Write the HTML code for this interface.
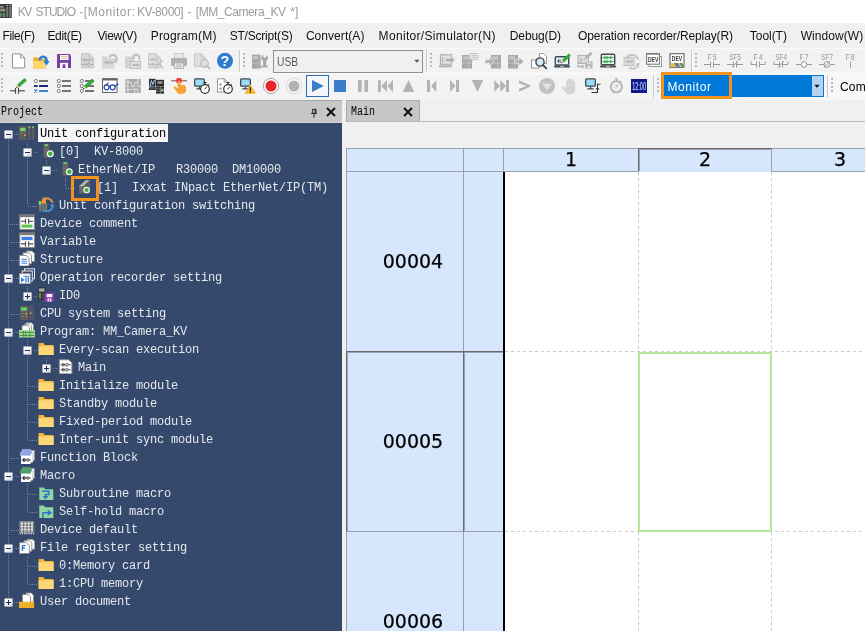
<!DOCTYPE html><html lang="en"><head><meta charset="utf-8"><title>KV STUDIO</title><style>
*{box-sizing:border-box;margin:0;padding:0}
html,body{width:865px;height:631px;overflow:hidden;background:#f0f0f0}
body{position:relative;will-change:transform;font-family:"Liberation Sans",sans-serif;font-size:12px;color:#000}
.abs{position:absolute}
.t{position:absolute;white-space:pre;line-height:1}
#title{left:0;top:0;width:865px;height:23px;background:#fff}
#menubar{left:0;top:23px;width:865px;height:25px;background:#f0f0f0}
#tb1{left:0;top:48px;width:865px;height:25px;background:#f2f2f2}
#tb2{left:0;top:73px;width:865px;height:27px;background:linear-gradient(to right,#f3f3f3 0,#f3f3f3 700px,#f8f8f8 865px)}
.mi{position:absolute;top:29px;height:14px;line-height:14px;white-space:pre;font-size:12px;color:#111}
.ic{position:absolute;width:16px;height:16px;overflow:visible}
.grip{position:absolute;width:2px;height:15px;background:repeating-linear-gradient(to bottom,#b4b4b4 0,#b4b4b4 2px,transparent 2px,transparent 4px)}
.sep{position:absolute;width:1px;height:21px;background:#c9c9c9}
#phead{left:0;top:100px;width:342px;height:23px;background:#c7c7c7;border-top:1px solid #a9a9a9;border-bottom:1px solid #d6d6d2;z-index:2}
#tree{left:0;top:122px;width:342px;height:509px;background:#34496b;overflow:hidden}
.mono{font-family:"Liberation Mono",monospace;font-size:12px;letter-spacing:-0.2px}
.row{position:absolute;left:0;height:18px;line-height:20px;white-space:pre;color:#e4e8ee}
.row span{position:absolute;top:0;height:18px;line-height:18px;white-space:pre}
.pm{position:absolute;width:9px;height:9px;border:1px solid #a4abb8;background:linear-gradient(135deg,#fff 0%,#f4f4f4 50%,#d0d3d8 100%);border-radius:1px}
.pm:before{content:"";position:absolute;left:1px;top:3px;width:5px;height:1px;background:#1a2a5a}
.pm.plus:after{content:"";position:absolute;left:3px;top:1px;width:1px;height:5px;background:#1a2a5a}
.hd{position:absolute;height:1px;background:repeating-linear-gradient(to right,#7d8aa3 0,#7d8aa3 1px,transparent 1px,transparent 2px)}
.vd{position:absolute;width:1px;background:repeating-linear-gradient(to bottom,#7d8aa3 0,#7d8aa3 1px,transparent 1px,transparent 2px)}
#tab{left:346px;top:100px;width:74px;height:22px;background:#c7c7c7;border:1px solid #a9a9a9;border-bottom-color:#b9b9b9}
#grid{left:346px;top:148px;width:519px;height:483px;background:#fff;overflow:hidden}
.gh{position:absolute;background:#d6e6fc}
.gl{position:absolute;background:#9aa0aa}
.num{position:absolute;font-family:"DejaVu Sans","Liberation Sans",sans-serif;font-size:19px;line-height:20px;height:20px;text-align:center;color:#000;white-space:pre;-webkit-text-stroke:0.25px #000}
</style></head><body>
<div id="title" class="abs">
<svg class="abs" style="left:0px;top:4px" width="12" height="14" viewBox="0 0 12 14" ><rect x="0" y="0" width="11.8" height="14" fill="#3a3f39"/><rect x="0.3" y="2" width="3" height="1.6" fill="#a8a8a8"/><rect x="0.3" y="4.6" width="4.8" height="3" fill="#858585"/><rect x="0.3" y="5.4" width="4.8" height="0.8" fill="#aaa9a2"/><rect x="0" y="9.2" width="1.8" height="3.6" fill="#4f9a55"/><rect x="2.8" y="9" width="2.2" height="4" fill="#7a8477"/><rect x="6.4" y="2.8" width="1.7" height="10.4" fill="#7c7c7c"/><rect x="9.2" y="2.8" width="1.7" height="10.4" fill="#7c7c7c"/><rect x="6.8" y="1" width="1" height="1" fill="#d4ead0"/><rect x="9.6" y="1" width="1" height="1" fill="#d4ead0"/></svg>
<div class="t" style="left:17.80px;top:5px;font-size:12px;line-height:14px;color:#9b9b9b;letter-spacing:-1.604px">KV</div>
<div class="t" style="left:35.50px;top:5px;font-size:12px;line-height:14px;color:#9b9b9b;letter-spacing:-0.960px">STUDIO</div>
<div class="t" style="left:79.20px;top:5px;font-size:12px;line-height:14px;color:#9b9b9b;letter-spacing:0.573px">-[Monitor:</div>
<div class="t" style="left:136.90px;top:5px;font-size:12px;line-height:14px;color:#9b9b9b;letter-spacing:-0.391px">KV-8000]</div>
<div class="t" style="left:187.50px;top:5px;font-size:12px;line-height:14px;color:#9b9b9b;letter-spacing:0.000px">-</div>
<div class="t" style="left:195.80px;top:5px;font-size:12px;line-height:14px;color:#9b9b9b;letter-spacing:-0.430px">[MM_Camera_KV</div>
<div class="t" style="left:290.20px;top:5px;font-size:12px;line-height:14px;color:#9b9b9b;letter-spacing:0.130px">*]</div>
</div>
<div id="menubar" class="abs"></div>
<div class="mi" style="left:2.40px;letter-spacing:-0.344px">File(F)</div>
<div class="mi" style="left:47.40px;letter-spacing:-0.330px">Edit(E)</div>
<div class="mi" style="left:97.40px;letter-spacing:-0.315px">View(V)</div>
<div class="mi" style="left:150.70px;letter-spacing:0.188px">Program(M)</div>
<div class="mi" style="left:229.70px;letter-spacing:-0.213px">ST/Script(S)</div>
<div class="mi" style="left:305.90px;letter-spacing:0.054px">Convert(A)</div>
<div class="mi" style="left:378.60px;letter-spacing:0.321px">Monitor/Simulator(N)</div>
<div class="mi" style="left:509.80px;letter-spacing:-0.118px">Debug(D)</div>
<div class="mi" style="left:578.10px;letter-spacing:-0.117px">Operation recorder/Replay(R)</div>
<div class="mi" style="left:749.80px;letter-spacing:-0.040px">Tool(T)</div>
<div class="mi" style="left:800.70px;letter-spacing:0.062px">Window(W)</div>
<div id="tb1" class="abs"></div><div id="tb2" class="abs"></div>
<svg class="abs" style="left:0;top:48px" width="865" height="52" viewBox="0 48 865 52">
<rect x="0" y="48" width="865" height="1" fill="#f9f9f9"/><rect x="0" y="72" width="865" height="3" fill="#f8f8f8"/>
<rect x="1" y="53" width="2" height="2" fill="#b9b9b9"/><rect x="1" y="57" width="2" height="2" fill="#b9b9b9"/><rect x="1" y="61" width="2" height="2" fill="#b9b9b9"/><rect x="1" y="65" width="2" height="2" fill="#b9b9b9"/>
<rect x="1" y="78" width="2" height="2" fill="#b9b9b9"/><rect x="1" y="82" width="2" height="2" fill="#b9b9b9"/><rect x="1" y="86" width="2" height="2" fill="#b9b9b9"/><rect x="1" y="90" width="2" height="2" fill="#b9b9b9"/>
<g transform="translate(10.5 53)"><path d="M2 0.9h8.2l4 4v10H2z" fill="#fff" stroke="#939393" stroke-width="1"/><path d="M10.2 0.9v4h4" fill="none" stroke="#939393" stroke-width="1"/></g>
<g transform="translate(33 53)"><path d="M0 4.2h5l1 1.8H12.5v9.6H0z" fill="#f2b430"/><path d="M0 8h13.2l-1 7.6H0z" fill="#fcd66e"/><path d="M6.6 7.4a3.5 3.5 0 0 1 7-0.3v2" fill="none" stroke="#2f7dd1" stroke-width="2.6"/><path d="M10.2 8h6.6l-3.3 4.4z" fill="#2f7dd1"/></g>
<g transform="translate(56 53)"><path d="M1 1h12.5L15 2.5V15H1z" fill="#7b3fa6"/><rect x="4" y="2" width="8.5" height="5" fill="#fff"/><path d="M5 3.6h6.5M5 5.4h6.5" stroke="#c9c29a" stroke-width="0.9"/><rect x="4" y="9.8" width="8" height="5.2" fill="#fff"/><rect x="6.6" y="11.3" width="2.8" height="3.7" fill="#7b3fa6"/></g>
<g transform="translate(79 53)"><path d="M2.5 0.8h7.8l4.2 4.2v9.8h-12z" fill="#dadada" stroke="#c2c2c2" stroke-width="1"/><path d="M10.3 0.8v4.2h4.2" fill="none" stroke="#c2c2c2" stroke-width="1"/><path d="M3 7H5.5M5.5 5.3v3.4M7.2 5.3v3.4M7.2 7H8.6M11.4 7H14" stroke="#aaaaaa" stroke-width="0.9" fill="none"/><circle cx="10" cy="7" r="1.35" fill="none" stroke="#aaaaaa" stroke-width="0.9"/><path d="M3 11.5H5.5M5.5 9.8v3.4M7.2 9.8v3.4M7.2 11.5H8.6M11.4 11.5H14" stroke="#aaaaaa" stroke-width="0.9" fill="none"/><circle cx="10" cy="11.5" r="1.35" fill="none" stroke="#aaaaaa" stroke-width="0.9"/></g>
<g transform="translate(102 53)"><path d="M0 3.5h5l1 2H12.5v10H0z" fill="#d0d0d0"/><path d="M0 6.5h13l-1 9H0z" fill="#dadada"/><path d="M7.5 4.5a3.6 3.6 0 0 1 7 0.2v2" fill="none" stroke="#c2c2c2" stroke-width="2.2"/><path d="M11 6.5h5.5l-2.7 4z" fill="#c2c2c2"/><path d="M1.5 9.5H4M4 7.8v3.4M5.7 7.8v3.4M5.7 9.5H7.1M9.9 9.5H12" stroke="#ababab" stroke-width="0.9" fill="none"/><circle cx="8.5" cy="9.5" r="1.35" fill="none" stroke="#ababab" stroke-width="0.9"/></g>
<g transform="translate(125 53)"><path d="M0 3.5h5l1 2H9v10H0z" fill="#d2d2d2"/><path d="M8 6V4.2a3.2 3.2 0 0 1 6.3 0.2V7" fill="none" stroke="#c2c2c2" stroke-width="2.2"/><path d="M5.2 5.5h5.6L8 2z" fill="#c2c2c2"/><rect x="5.5" y="8.5" width="10" height="7" fill="#e4e4e4" stroke="#bdbdbd" stroke-width="1"/><path d="M7 12h1.6M9.6 12h1M13 12h1.6M8.6 10.6v2.8M9.6 10.6v2.8" stroke="#ababab" stroke-width="0.9" fill="none"/><circle cx="12" cy="12" r="1.1" fill="none" stroke="#ababab" stroke-width="0.9"/></g>
<g transform="translate(148 53)"><path d="M0.5 0.8h7.8l4.2 4.2v9.8h-12z" fill="#dedede" stroke="#c8c8c8" stroke-width="1"/><path d="M8.3 0.8v4.2h4.2" fill="none" stroke="#c8c8c8" stroke-width="1"/><path d="M1.5 6.5h8M1.5 11.5h8M4 5v3M5.5 5v3M4 10v3M5.5 10v3" stroke="#b8b8b8" stroke-width="0.9" fill="none"/><path d="M7 5.5l8.5 10M15 7l-8 8.5" stroke="#c0c0c0" stroke-width="1.1" fill="none"/></g>
<g transform="translate(171 53)"><rect x="3.3" y="0.6" width="9.4" height="5" fill="#e6e6e6" stroke="#c6c6c6" stroke-width="0.9"/><rect x="0" y="5" width="16" height="8" rx="0.8" fill="#b2b2b2"/><rect x="3.3" y="10" width="9.4" height="5.5" fill="#ededed" stroke="#b2b2b2" stroke-width="1"/><path d="M5 12h6M5 13.8h6" stroke="#b2b2b2" stroke-width="0.9"/></g>
<g transform="translate(194 53)"><path d="M0.5 0.8h7l4 4v8.7h-11z" fill="#dedede" stroke="#c8c8c8" stroke-width="1"/><path d="M7.5 0.8v4h4" fill="none" stroke="#c8c8c8" stroke-width="1"/><circle cx="10.5" cy="10.3" r="3.8" fill="#e0e0e0" stroke="#b8b8b8" stroke-width="1.2"/><path d="M13.2 13l2.6 2.8" stroke="#b8b8b8" stroke-width="1.6" stroke-linecap="round"/></g>
<g transform="translate(217 53)"><circle cx="8" cy="7.8" r="8" fill="#2f7bd0"/><text x="8" y="13" text-anchor="middle" font-family="Liberation Sans,sans-serif" font-weight="bold" font-size="14.5" fill="#fff">?</text></g>
<g transform="translate(251 53)"><rect x="1" y="1.6" width="8.6" height="14" fill="#a4a4a4"/><rect x="2" y="2.9" width="4.73" height="3.2" fill="#c4c4c4"/><path d="M6.848 1.6v14M1 10h8.6" stroke="#c4c4c4" stroke-width="0.8"/><path d="M10.3 4.2l2-2.6v2.2l1.6 1.2l1.4-1.2V1.5l1.6 2.3v2.4l-1.6 1.6v5.6h-3.2V7.8l-1.8-1.6z" fill="#a8a8a8"/><rect x="9.6" y="12.8" width="7.2" height="1.7" fill="#a8a8a8"/></g>
<g transform="translate(439 53)"><rect x="1.5" y="1.8" width="11" height="9.5" fill="#e4e4e4" stroke="#b0b0b0" stroke-width="1.2"/><path d="M0 12.3h13v2H0z" fill="#b0b0b0"/><path d="M3.5 4.5v5M5 4.5v1.6M5 7.5v1.6" stroke="#b0b0b0" stroke-width="0.9"/><path d="M6.5 5.3h5V3l4.5 4l-4.5 4V8.7h-5z" fill="#b0b0b0" stroke="#e8e8e8" stroke-width="0.6"/></g>
<g transform="translate(462 53)"><rect x="0" y="2" width="10" height="13.5" fill="#a8a8a8"/><rect x="1" y="3.3" width="5.5" height="3.2" fill="#c6c6c6"/><path d="M6.8 2v13.5M0 10.1h10" stroke="#c6c6c6" stroke-width="0.8"/><path d="M8.3 0.5h7a0.8 0.8 0 0 1 .8 .8v4.4a.8 .8 0 0 1-.8 .8h-3.6l-1.7 1.8V6.5h-1.7a.8 .8 0 0 1-.8-.8V1.3a.8 .8 0 0 1 .8-.8z" fill="#ececec" stroke="#bcbcbc" stroke-width="0.9"/><path d="M9.3 2.6h5M9.3 4.4h5" stroke="#bcbcbc" stroke-width="0.9"/></g>
<g transform="translate(485 53)"><rect x="6" y="2" width="10" height="13.5" fill="#a8a8a8"/><rect x="7" y="3.3" width="5.5" height="3.2" fill="#c6c6c6"/><path d="M12.8 2v13.5M6 10.1h10" stroke="#c6c6c6" stroke-width="0.8"/><path d="M0 6.8h4.5V4.2L9.5 8.5L4.5 12.8V10.2H0z" fill="#b0b0b0" stroke="#ececec" stroke-width="0.7"/></g>
<g transform="translate(508 53)"><rect x="0" y="2" width="10" height="13.5" fill="#a8a8a8"/><rect x="1" y="3.3" width="5.5" height="3.2" fill="#c6c6c6"/><path d="M6.8 2v13.5M0 10.1h10" stroke="#c6c6c6" stroke-width="0.8"/><path d="M6.5 6.8h4.5V4.2L16 8.5L11 12.8V10.2H6.5z" fill="#b0b0b0" stroke="#ececec" stroke-width="0.7"/></g>
<g transform="translate(531 53)"><path d="M8.5 0.6h4.2l2.8 2.8v7.1h-7z" fill="#fff" stroke="#8a8a8a" stroke-width="0.9"/><rect x="0.5" y="7" width="7.5" height="8" fill="#fff" stroke="#8a8a8a" stroke-width="0.9"/><circle cx="9" cy="9" r="4.1" fill="#d3e9f8" stroke="#3d4852" stroke-width="1.4"/><path d="M12 12.2l3.3 3.2" stroke="#3d4852" stroke-width="1.9" stroke-linecap="round"/></g>
<g transform="translate(554 53)"><rect x="1.3" y="3.8" width="13.4" height="8.2" rx="1" fill="#e9f4fb" stroke="#3f4a55" stroke-width="1.4"/><path d="M0 12.6h16v0.9a1 1 0 0 1-1 1H1a1 1 0 0 1-1-1z" fill="#3f4a55"/><rect x="6" y="13" width="4" height="0.8" fill="#ccc"/><path d="M3 8h1.5M4.5 6.3v3.4M6 6.3v3.4" stroke="#3d4852" stroke-width="0.9"/><g transform="translate(6.8 10.2) rotate(-43)"><path d="M0 0L3 -1.6L3 1.6z" fill="#f2c79b"/><path d="M0 0L1.4 -0.75L1.4 0.75z" fill="#222"/><rect x="3" y="-1.6" width="9.5" height="3.2" fill="#3aa53a"/></g></g>
<g transform="translate(577 53)"><rect x="1" y="2.5" width="10.5" height="8" fill="#e0e0e0" stroke="#b4b4b4" stroke-width="1.1"/><path d="M3 5v3.5M4.5 5v3.5M2 9.5h3" stroke="#b4b4b4" stroke-width="0.9"/><g transform="translate(6.5 7.2) rotate(-43)"><path d="M0 0L3 -1.4L3 1.4z" fill="#d0d0d0"/><path d="M0 0L1.4 -0.75L1.4 0.75z" fill="#999"/><rect x="3" y="-1.4" width="8" height="2.8" fill="#b4b4b4"/></g><rect x="8.3" y="8.5" width="7.2" height="7" fill="#b4b4b4"/><rect x="10" y="9.3" width="4" height="2" fill="#dcdcdc"/><rect x="10" y="13" width="4" height="2.5" fill="#dcdcdc"/><path d="M1 11.5v2h4.5" fill="none" stroke="#b4b4b4" stroke-width="1.3"/><path d="M5 11.6l2.6 1.9L5 15.4z" fill="#b4b4b4"/></g>
<g transform="translate(600 53)"><rect x="1.3" y="1.3" width="13.4" height="10.4" rx="1" fill="#e9f4fb" stroke="#3f4a55" stroke-width="1.4"/><path d="M0 12.6h16v0.9a1 1 0 0 1-1 1H1a1 1 0 0 1-1-1z" fill="#3f4a55"/><rect x="6" y="13" width="4" height="0.8" fill="#ccc"/><path d="M2.5 4.6h11M2.5 8.6h11" stroke="#2e9a3a" stroke-width="0.9"/><rect x="4" y="3.3" width="1.8" height="2.6" fill="#3db54a"/><rect x="6.3" y="3.3" width="1.8" height="2.6" fill="#3db54a"/><circle cx="10.6" cy="4.6" r="1.3" fill="#3db54a"/><rect x="4" y="7.3" width="1.8" height="2.6" fill="#3db54a"/><rect x="6.3" y="7.3" width="1.8" height="2.6" fill="#3db54a"/><circle cx="10.6" cy="8.6" r="1.3" fill="#3db54a"/></g>
<g transform="translate(623 53)"><rect x="1" y="4.5" width="10" height="8" fill="#dcdcdc" stroke="#bdbdbd" stroke-width="1"/><path d="M2.5 8.5h2M4.5 7v3M6 7v3M6 8.5h1M9 8.5h1.3" stroke="#adadad" stroke-width="0.9" fill="none"/><circle cx="8" cy="8.5" r="1" fill="none" stroke="#adadad" stroke-width="0.8"/><path d="M5 3.5a6 6 0 0 1 10 3" fill="none" stroke="#c4c4c4" stroke-width="2"/><path d="M2.3 5l3.2-4.2l1.5 4.6z" fill="#c4c4c4"/><path d="M6 14.5a6 6 0 0 0 9.5-4.5" fill="none" stroke="#c4c4c4" stroke-width="2"/><path d="M12.5 10.5l4 .2l-1.5 4z" fill="#c4c4c4"/></g>
<g transform="translate(646 53)"><rect x="3" y="3.5" width="12.5" height="10" fill="#fff" stroke="#8c8c8c" stroke-width="0.9"/><rect x="0.6" y="0.6" width="12.8" height="10.6" fill="#fff" stroke="#7a7a7a" stroke-width="1.1"/><rect x="0.6" y="0.3" width="12.8" height="1.3" fill="#7a7a7a"/><text x="7.1" y="9.2" text-anchor="middle" font-family="Liberation Sans,sans-serif" font-weight="bold" font-size="7.6" textLength="10.4" lengthAdjust="spacingAndGlyphs" fill="#3a3a3a">DEV</text></g>
<g transform="translate(669 53)"><rect x="1" y="0.7" width="14" height="13.6" fill="#fff" stroke="#6e6e6e" stroke-width="1.2"/><rect x="1.6" y="10" width="12.8" height="3.8" fill="#f2c325"/><path d="M5 10h3.5l2.5 3.8H7.5z" fill="#3a7cc8"/><path d="M10.5 10h2l1.9 2.5v1.3h-1.4z" fill="#3a7cc8"/><text x="8" y="8.3" text-anchor="middle" font-family="Liberation Sans,sans-serif" font-weight="bold" font-size="7.6" textLength="10.4" lengthAdjust="spacingAndGlyphs" fill="#3a3a3a">DEV</text></g>
<g transform="translate(704 53)"><text x="3.7" y="6.7" font-family="Liberation Sans,sans-serif" font-size="8.8" textLength="3.9" lengthAdjust="spacingAndGlyphs" fill="#929292">F</text><text x="8.9" y="6.7" font-family="Liberation Sans,sans-serif" font-size="8.8" textLength="3.6" lengthAdjust="spacingAndGlyphs" fill="#929292">5</text><path d="M0 11.5h6.5M9.5 11.5h6.5M6.5 8.6v5.8M9.5 8.6v5.8" stroke="#9a9a9a" stroke-width="1" fill="none"/></g>
<g transform="translate(727 53)"><text x="2.3" y="6.7" font-family="Liberation Sans,sans-serif" font-size="8.8" textLength="11.6" lengthAdjust="spacingAndGlyphs" fill="#929292">SF5</text><path d="M0 11.5h6.5M9.5 11.5h6.5M6.5 8.5v6M9.5 8.5v6M5 14.5l6-6.5" stroke="#9a9a9a" stroke-width="1" fill="none"/></g>
<g transform="translate(750 53)"><text x="3.7" y="6.7" font-family="Liberation Sans,sans-serif" font-size="8.8" textLength="3.9" lengthAdjust="spacingAndGlyphs" fill="#929292">F</text><text x="8.9" y="6.7" font-family="Liberation Sans,sans-serif" font-size="8.8" textLength="3.6" lengthAdjust="spacingAndGlyphs" fill="#929292">4</text><path d="M1 8.5v3h5.5M6.5 8.5v6M9.5 8.5v6M9.5 11.5h5.5v-3" stroke="#9a9a9a" stroke-width="1" fill="none"/></g>
<g transform="translate(773 53)"><text x="2.3" y="6.7" font-family="Liberation Sans,sans-serif" font-size="8.8" textLength="11.6" lengthAdjust="spacingAndGlyphs" fill="#929292">SF4</text><path d="M1 8.5v3h5.5M6.5 8.5v6M9.5 8.5v6M9.5 11.5h5.5v-3M5 14.5l6-6.5" stroke="#9a9a9a" stroke-width="1" fill="none"/></g>
<g transform="translate(796 53)"><text x="3.7" y="6.7" font-family="Liberation Sans,sans-serif" font-size="8.8" textLength="3.9" lengthAdjust="spacingAndGlyphs" fill="#929292">F</text><text x="8.9" y="6.7" font-family="Liberation Sans,sans-serif" font-size="8.8" textLength="3.6" lengthAdjust="spacingAndGlyphs" fill="#929292">7</text><path d="M0 11.5h5M11 11.5h5" stroke="#9a9a9a" stroke-width="1" fill="none"/><circle cx="8" cy="11.5" r="2.9" stroke="#9a9a9a" stroke-width="1" fill="none"/></g>
<g transform="translate(819 53)"><text x="2.3" y="6.7" font-family="Liberation Sans,sans-serif" font-size="8.8" textLength="11.6" lengthAdjust="spacingAndGlyphs" fill="#929292">SF7</text><path d="M0 11.5h5M11 11.5h5M5.2 14.6l5.6-6.2" stroke="#9a9a9a" stroke-width="1" fill="none"/><circle cx="8" cy="11.5" r="2.9" stroke="#9a9a9a" stroke-width="1" fill="none"/></g>
<g transform="translate(842 53)"><text x="3.7" y="6.7" font-family="Liberation Sans,sans-serif" font-size="8.8" textLength="3.9" lengthAdjust="spacingAndGlyphs" fill="#929292">F</text><text x="8.9" y="6.7" font-family="Liberation Sans,sans-serif" font-size="8.8" textLength="3.6" lengthAdjust="spacingAndGlyphs" fill="#929292">8</text><path d="M8.5 8.7v5.8" stroke="#9a9a9a" stroke-width="1" fill="none"/></g>
<rect x="239" y="50" width="1" height="22" fill="#c9c9c9"/><rect x="240" y="50" width="1" height="22" fill="#fafafa"/>
<rect x="243" y="53" width="2" height="2" fill="#b9b9b9"/><rect x="243" y="57" width="2" height="2" fill="#b9b9b9"/><rect x="243" y="61" width="2" height="2" fill="#b9b9b9"/><rect x="243" y="65" width="2" height="2" fill="#b9b9b9"/>
<rect x="426" y="50" width="1" height="22" fill="#c9c9c9"/><rect x="427" y="50" width="1" height="22" fill="#fafafa"/>
<rect x="430" y="53" width="2" height="2" fill="#b9b9b9"/><rect x="430" y="57" width="2" height="2" fill="#b9b9b9"/><rect x="430" y="61" width="2" height="2" fill="#b9b9b9"/><rect x="430" y="65" width="2" height="2" fill="#b9b9b9"/>
<rect x="691" y="50" width="1" height="22" fill="#c9c9c9"/><rect x="692" y="50" width="1" height="22" fill="#fafafa"/>
<rect x="695" y="53" width="2" height="2" fill="#b9b9b9"/><rect x="695" y="57" width="2" height="2" fill="#b9b9b9"/><rect x="695" y="61" width="2" height="2" fill="#b9b9b9"/><rect x="695" y="65" width="2" height="2" fill="#b9b9b9"/>
<rect x="306.5" y="75.5" width="22" height="21" fill="#f3f7fb" stroke="#2a6db3" stroke-width="1"/>
<g transform="translate(309 78)"><path d="M3 2L14.8 8L3 14z" fill="#3a7cc8"/></g>
<g transform="translate(10 78)"><path d="M0 12.8h5.6M9 12.8h6M5.6 9.8v6M8.6 9.8v6" stroke="#333" stroke-width="1" fill="none"/><g transform="translate(6 10) rotate(-42)"><path d="M0 0L3 -1.7L3 1.7z" fill="#f2c79b"/><path d="M0 0L1.4 -0.75L1.4 0.75z" fill="#222"/><rect x="3" y="-1.7" width="10" height="3.4" fill="#3aa53a"/></g></g>
<g transform="translate(33.5 78)"><circle cx="2.3" cy="3" r="1.6" fill="#fff" stroke="#6e6e6e" stroke-width="0.9"/><rect x="5.5" y="2.05" width="9" height="1.9" fill="#6e6e6e"/><rect x="0.5" y="7.1" width="3.6" height="1.8" fill="#101a70"/><rect x="5.5" y="7.05" width="9" height="1.9" fill="#101a70"/><path d="M0.8 11.5l3 3M3.8 11.5l-3 3" stroke="#3a7cc8" stroke-width="1.1"/><rect x="5.5" y="12.05" width="9" height="1.9" fill="#3a7cc8"/></g>
<g transform="translate(56.5 78)"><circle cx="2.3" cy="3" r="1.6" fill="#fff" stroke="#6e6e6e" stroke-width="0.9"/><rect x="5.5" y="2.05" width="9" height="1.9" fill="#6e6e6e"/><circle cx="2.3" cy="8" r="1.6" fill="#fff" stroke="#6e6e6e" stroke-width="0.9"/><rect x="5.5" y="7.05" width="9" height="1.9" fill="#6e6e6e"/><circle cx="2.3" cy="13" r="1.6" fill="#fff" stroke="#6e6e6e" stroke-width="0.9"/><rect x="5.5" y="12.05" width="9" height="1.9" fill="#6e6e6e"/></g>
<g transform="translate(79.5 78)"><circle cx="2.3" cy="3" r="1.6" fill="#fff" stroke="#6e6e6e" stroke-width="0.9"/><rect x="5.5" y="2.05" width="9" height="1.9" fill="#6e6e6e"/><circle cx="2.3" cy="8" r="1.6" fill="#fff" stroke="#6e6e6e" stroke-width="0.9"/><rect x="5.5" y="7.05" width="9" height="1.9" fill="#6e6e6e"/><circle cx="2.3" cy="13" r="1.6" fill="#fff" stroke="#6e6e6e" stroke-width="0.9"/><rect x="5.5" y="12.05" width="9" height="1.9" fill="#6e6e6e"/><g transform="translate(3.5 11.2) rotate(-42)"><path d="M0 0L3 -1.8L3 1.8z" fill="#f2c79b"/><path d="M0 0L1.4 -0.75L1.4 0.75z" fill="#222"/><rect x="3" y="-1.8" width="11" height="3.6" fill="#3aa53a"/></g></g>
<g transform="translate(102 78)"><rect x="0.5" y="0.8" width="14.5" height="13.7" fill="#fff" stroke="#666" stroke-width="1"/><rect x="0" y="0.3" width="15.5" height="2.2" fill="#666"/><circle cx="4.6" cy="9.3" r="2.5" fill="none" stroke="#1f3fa8" stroke-width="1.2"/><circle cx="10.6" cy="9.3" r="2.5" fill="none" stroke="#1f3fa8" stroke-width="1.2"/><path d="M2.3 8.3L6.5 4.6M7 9h1.3M13 8.4l2.6-2.6M15.6 5.2v2" fill="none" stroke="#1f3fa8" stroke-width="1.1"/></g>
<g transform="translate(125 78)"><rect x="0.3" y="1" width="15.5" height="14" fill="#a8a8a8"/><path d="M3 1v14M0.3 4.2h6.4M0.3 8h3M0.3 11.7h6.4M6.7 4.2v4.4h3v-4.4M9.7 4.2h3.2v-3.2M12.9 4.2v4.4h3M6.7 11.7v-0.6h6.2v4M9.7 11.1v4" fill="none" stroke="#ececec" stroke-width="0.9"/></g>
<g transform="translate(148.5 78)"><rect x="0.5" y="0.8" width="6.5" height="10.5" fill="#2a2f3a"/><path d="M1.3 9.5l1.6-7l1.5 4l1.6-4.5" fill="none" stroke="#c8d4f0" stroke-width="0.9"/><path d="M1 8.3h5M1.5 10.2h4" stroke="#aab4d4" stroke-width="0.7"/><rect x="0.3" y="10.8" width="7" height="1" fill="#111"/><rect x="7.5" y="1.8" width="8" height="13.8" fill="#2c2c2c"/><rect x="9" y="3.2" width="5" height="2.6" fill="#9a9a9a"/><path d="M7.5 8.5h8M7.5 11h8M7.5 13.3h8M12 8.5v7" stroke="#8a8a8a" stroke-width="0.8"/><rect x="12.6" y="11.6" width="2.4" height="1.2" fill="#e8e8e8"/></g>
<g transform="translate(171 78)"><path d="M0 2.8h16" stroke="#8a2a2a" stroke-width="0.9"/><rect x="5.5" y="0.3" width="5" height="4.6" fill="#e8262a"/><path d="M6.6 4v6.2l-2.3-1.7c-1-.7-2.2 .4-1.4 1.5l3.2 4.4c.8 1 1.8 1.6 3.2 1.6h2c2.2 0 3.9-1.7 3.9-3.9V10c0-1.7-1.3-2.9-3-2.9H9.6V4c0-2-3-2-3 0z" fill="#f7a23a"/></g>
<g transform="translate(194 78)"><rect x="0.65" y="0.95" width="9.7" height="7.2" rx="1" fill="#9bdcf5" stroke="#3d4852" stroke-width="1.3"/><path d="M5.5 8.8v2M2.42 10.8h6.16" stroke="#3d4852" stroke-width="1.2"/><circle cx="11" cy="11" r="4.3" fill="#fff" stroke="#333" stroke-width="1.2"/><path d="M9.5 4.5h3M11 4.7v1.6M13.795 6.315l1.2 1.2" stroke="#333" stroke-width="1.1" fill="none"/><path d="M10.7 11.4l2-2.6" stroke="#333" stroke-width="1"/></g>
<g transform="translate(217 78)"><path d="M0.5 0.8h6.7l3.3 3.3v9.9h-10z" fill="#fff" stroke="#8a8a8a" stroke-width="0.9"/><path d="M7.2 0.8v3.3h3.3" fill="none" stroke="#8a8a8a" stroke-width="0.9"/><path d="M2 6.5h2M4 5v3M2 10.5h2M4 9v3" stroke="#8a8a8a" stroke-width="0.9"/><circle cx="11" cy="11" r="4.3" fill="#fff" stroke="#333" stroke-width="1.2"/><path d="M9.5 4.5h3M11 4.7v1.6M13.795 6.315l1.2 1.2" stroke="#333" stroke-width="1.1" fill="none"/><path d="M10.7 11.4l2-2.6" stroke="#333" stroke-width="1"/></g>
<g transform="translate(240 78)"><rect x="0.65" y="0.95" width="9.7" height="7.2" rx="1" fill="#9bdcf5" stroke="#3d4852" stroke-width="1.3"/><path d="M5.5 8.8v2M2.42 10.8h6.16" stroke="#3d4852" stroke-width="1.2"/><path d="M10.3 6.2L16.2 15.8H4.4z" fill="#f5b92e"/><path d="M10.3 9.3v3.6" stroke="#222" stroke-width="1.3"/><circle cx="10.3" cy="14.3" r="0.75" fill="#222"/></g>
<g transform="translate(263 78)"><circle cx="8" cy="8" r="7.6" fill="#fff" stroke="#9a9a9a" stroke-width="0.9"/><circle cx="8" cy="8" r="5.5" fill="#e6262b"/></g>
<g transform="translate(286 78)"><circle cx="8" cy="8" r="7.6" fill="#fbfbfb" stroke="#d2d2d2" stroke-width="0.9"/><circle cx="8" cy="8" r="5.5" fill="#b3b3b3"/></g>
<g transform="translate(332 78)"><rect x="2" y="2" width="12" height="12" fill="#3a7cc8"/></g>
<g transform="translate(355 78)"><rect x="3" y="2" width="3.6" height="12" fill="#b3b3b3"/><rect x="9.4" y="2" width="3.6" height="12" fill="#b3b3b3"/></g>
<g transform="translate(378 78)"><rect x="0" y="2" width="2.8" height="12" fill="#b3b3b3"/><path d="M9 2v12L3.2 8z" fill="#b3b3b3"/><path d="M15 2v12L9.3 8z" fill="#b3b3b3"/></g>
<g transform="translate(400.5 78)"><path d="M8 2l5.8 12H2.2z" fill="#b3b3b3"/></g>
<g transform="translate(424 78)"><rect x="3" y="2" width="3" height="12" fill="#b3b3b3"/><path d="M12.3 2v12L7 8z" fill="#b3b3b3"/></g>
<g transform="translate(447 78)"><rect x="9" y="2" width="3" height="12" fill="#b3b3b3"/><path d="M3 2v12L8.5 8z" fill="#b3b3b3"/></g>
<g transform="translate(469.5 78)"><path d="M8 14L2.2 2h11.6z" fill="#b3b3b3"/></g>
<g transform="translate(494 78)"><rect x="12" y="2" width="3" height="12" fill="#b3b3b3"/><path d="M0.3 2v12L6 8z" fill="#b3b3b3"/><path d="M6.3 2v12L12 8z" fill="#b3b3b3"/></g>
<g transform="translate(516.5 78)"><path d="M2.5 2.2v3L10 8L2.5 10.8v3L14 8.6V7.4z" fill="#b3b3b3"/></g>
<g transform="translate(539 78)"><circle cx="8" cy="8" r="8" fill="#c2c2c2"/><path d="M3.3 5.8h9.4L8 12.6z" fill="#e4e4e4"/></g>
<g transform="translate(562 78)"><path d="M5.2 15.8c-1.4-1.6-3.3-3.9-4.7-5.6c-.7-.9 .5-2 1.5-1.1l2.6 2.3V3.6c0-1.4 2-1.4 2 0v4.4V1.7c0-1.4 2.1-1.4 2.1 0V8V2.2c0-1.4 2.1-1.4 2.1 0V8.2V4.2c0-1.3 2-1.3 2 0v7.6c0 2.4-1.4 4-3.2 4z" fill="#d2d2d2" stroke="#d2d2d2" stroke-width="0.7"/><path d="M6.6 8V4M8.7 8V3M10.8 8.2V3.5" stroke="#e6e6e6" stroke-width="0.5"/></g>
<g transform="translate(585 78)"><rect x="0.65" y="0.95" width="9.7" height="7.2" rx="1" fill="#9bdcf5" stroke="#3d4852" stroke-width="1.3"/><path d="M5.5 8.8v2M2.42 10.8h6.16" stroke="#3d4852" stroke-width="1.2"/><path d="M6.5 14.5h6V6.2h3" fill="none" stroke="#333" stroke-width="1.1"/><path d="M11 11.5l1.5-2l1.5 2" fill="none" stroke="#333" stroke-width="1"/></g>
<g transform="translate(608.3 78)"><circle cx="8" cy="8.8" r="5.7" fill="#ebebeb" stroke="#adadad" stroke-width="1.6"/><path d="M6.5 0.9h3M8 1.1v1.6M11.705 2.785l1.2 1.2" stroke="#adadad" stroke-width="1.1" fill="none"/><path d="M7.7 9.2l2-2.6" stroke="#adadad" stroke-width="1"/></g>
<g transform="translate(631 78)"><rect x="0" y="1" width="16" height="14" fill="#0d1b8c"/><text x="1.2" y="12" font-family="Liberation Sans,sans-serif" font-size="10.5" textLength="13.8" lengthAdjust="spacingAndGlyphs" fill="#cfe6ff">12:00</text></g>
<rect x="653" y="75" width="1" height="23" fill="#c9c9c9"/><rect x="654" y="75" width="1" height="23" fill="#fafafa"/>
<rect x="657" y="78" width="2" height="2" fill="#b9b9b9"/><rect x="657" y="82" width="2" height="2" fill="#b9b9b9"/><rect x="657" y="86" width="2" height="2" fill="#b9b9b9"/><rect x="657" y="90" width="2" height="2" fill="#b9b9b9"/>
<rect x="827" y="75" width="1" height="23" fill="#c9c9c9"/><rect x="828" y="75" width="1" height="23" fill="#fafafa"/>
<rect x="831" y="78" width="2" height="2" fill="#b9b9b9"/><rect x="831" y="82" width="2" height="2" fill="#b9b9b9"/><rect x="831" y="86" width="2" height="2" fill="#b9b9b9"/><rect x="831" y="90" width="2" height="2" fill="#b9b9b9"/>
</svg>
<div class="abs" style="left:273px;top:50px;width:150px;height:23px;border:1px solid #909090;background:#f0f0f0"></div>
<div class="t" style="left:276.83px;top:55px;font-size:12px;line-height:14px;color:#5a5a5a;transform:scaleX(0.8546);transform-origin:0 0">USB</div>
<svg class="abs" style="left:413px;top:59px" width="8" height="5" viewBox="0 0 8 5"><path d="M1.2 0.7h5.4L3.9 3.8z" fill="#555"/></svg>
<div class="abs" style="left:663px;top:75px;width:161px;height:22px;background:#0078d7"></div>
<div class="abs" style="left:812px;top:76px;width:11px;height:20px;background:#b5d3f0"></div>
<svg class="abs" style="left:813px;top:84px" width="8" height="5" viewBox="0 0 8 5"><path d="M1.3 0.8h5.4L4 3.8z" fill="#111"/></svg>
<div class="t" style="left:667.50px;top:80px;font-size:12px;line-height:14px;color:#fff;letter-spacing:0.580px">Monitor</div>
<div class="abs" style="left:661px;top:72px;width:71px;height:27px;border:3px solid #f4931c"></div>
<div class="t" style="left:840px;top:80px;font-size:12px;line-height:14px;color:#000;letter-spacing:0.2px">Com</div>
<div id="phead" class="abs"><div class="t mono" style="left:1px;top:4px;line-height:14px;color:#000;font-size:12px;letter-spacing:0;transform:scaleX(0.8333);transform-origin:0 0">Project</div>
<svg class="abs" style="left:309px;top:6.5px" width="10" height="10" viewBox="0 0 10 12" ><path d="M3 1.5h4.5M3.5 1.5v5M6.5 1.5v5M7.3 1.5v5M1.5 6.5h7M5 6.5v5" stroke="#111" stroke-width="1.1" fill="none"/></svg>
<svg class="abs" style="left:325.5px;top:6px" width="10" height="10" viewBox="0 0 10 10" ><path d="M1 1L9 9M9 1L1 9" stroke="#111" stroke-width="2" fill="none"/></svg>
</div>
<div id="tree" class="abs mono">
<svg class="abs" style="left:0;top:0" width="343" height="509" viewBox="0 0 343 509" shape-rendering="crispEdges"><path d="M8 18h1v1h-1zM8 20h1v1h-1zM8 22h1v1h-1zM8 24h1v1h-1zM8 26h1v1h-1zM8 28h1v1h-1zM8 30h1v1h-1zM8 32h1v1h-1zM8 34h1v1h-1zM8 36h1v1h-1zM8 38h1v1h-1zM8 40h1v1h-1zM8 42h1v1h-1zM8 44h1v1h-1zM8 46h1v1h-1zM8 48h1v1h-1zM8 50h1v1h-1zM8 52h1v1h-1zM8 54h1v1h-1zM8 56h1v1h-1zM8 58h1v1h-1zM8 60h1v1h-1zM8 62h1v1h-1zM8 64h1v1h-1zM8 66h1v1h-1zM8 68h1v1h-1zM8 70h1v1h-1zM8 72h1v1h-1zM8 74h1v1h-1zM8 76h1v1h-1zM8 78h1v1h-1zM8 80h1v1h-1zM8 82h1v1h-1zM8 84h1v1h-1zM8 86h1v1h-1zM8 88h1v1h-1zM8 90h1v1h-1zM8 92h1v1h-1zM8 94h1v1h-1zM8 96h1v1h-1zM8 98h1v1h-1zM8 100h1v1h-1zM8 102h1v1h-1zM8 104h1v1h-1zM8 106h1v1h-1zM8 108h1v1h-1zM8 110h1v1h-1zM8 112h1v1h-1zM8 114h1v1h-1zM8 116h1v1h-1zM8 118h1v1h-1zM8 120h1v1h-1zM8 122h1v1h-1zM8 124h1v1h-1zM8 126h1v1h-1zM8 128h1v1h-1zM8 130h1v1h-1zM8 132h1v1h-1zM8 134h1v1h-1zM8 136h1v1h-1zM8 138h1v1h-1zM8 140h1v1h-1zM8 142h1v1h-1zM8 144h1v1h-1zM8 146h1v1h-1zM8 148h1v1h-1zM8 150h1v1h-1zM8 162h1v1h-1zM8 164h1v1h-1zM8 166h1v1h-1zM8 168h1v1h-1zM8 170h1v1h-1zM8 172h1v1h-1zM8 174h1v1h-1zM8 176h1v1h-1zM8 178h1v1h-1zM8 180h1v1h-1zM8 182h1v1h-1zM8 184h1v1h-1zM8 186h1v1h-1zM8 188h1v1h-1zM8 190h1v1h-1zM8 192h1v1h-1zM8 194h1v1h-1zM8 196h1v1h-1zM8 198h1v1h-1zM8 200h1v1h-1zM8 202h1v1h-1zM8 204h1v1h-1zM8 216h1v1h-1zM8 218h1v1h-1zM8 220h1v1h-1zM8 222h1v1h-1zM8 224h1v1h-1zM8 226h1v1h-1zM8 228h1v1h-1zM8 230h1v1h-1zM8 232h1v1h-1zM8 234h1v1h-1zM8 236h1v1h-1zM8 238h1v1h-1zM8 240h1v1h-1zM8 242h1v1h-1zM8 244h1v1h-1zM8 246h1v1h-1zM8 248h1v1h-1zM8 250h1v1h-1zM8 252h1v1h-1zM8 254h1v1h-1zM8 256h1v1h-1zM8 258h1v1h-1zM8 260h1v1h-1zM8 262h1v1h-1zM8 264h1v1h-1zM8 266h1v1h-1zM8 268h1v1h-1zM8 270h1v1h-1zM8 272h1v1h-1zM8 274h1v1h-1zM8 276h1v1h-1zM8 278h1v1h-1zM8 280h1v1h-1zM8 282h1v1h-1zM8 284h1v1h-1zM8 286h1v1h-1zM8 288h1v1h-1zM8 290h1v1h-1zM8 292h1v1h-1zM8 294h1v1h-1zM8 296h1v1h-1zM8 298h1v1h-1zM8 300h1v1h-1zM8 302h1v1h-1zM8 304h1v1h-1zM8 306h1v1h-1zM8 308h1v1h-1zM8 310h1v1h-1zM8 312h1v1h-1zM8 314h1v1h-1zM8 316h1v1h-1zM8 318h1v1h-1zM8 320h1v1h-1zM8 322h1v1h-1zM8 324h1v1h-1zM8 326h1v1h-1zM8 328h1v1h-1zM8 330h1v1h-1zM8 332h1v1h-1zM8 334h1v1h-1zM8 336h1v1h-1zM8 338h1v1h-1zM8 340h1v1h-1zM8 342h1v1h-1zM8 344h1v1h-1zM8 346h1v1h-1zM8 348h1v1h-1zM8 360h1v1h-1zM8 362h1v1h-1zM8 364h1v1h-1zM8 366h1v1h-1zM8 368h1v1h-1zM8 370h1v1h-1zM8 372h1v1h-1zM8 374h1v1h-1zM8 376h1v1h-1zM8 378h1v1h-1zM8 380h1v1h-1zM8 382h1v1h-1zM8 384h1v1h-1zM8 386h1v1h-1zM8 388h1v1h-1zM8 390h1v1h-1zM8 392h1v1h-1zM8 394h1v1h-1zM8 396h1v1h-1zM8 398h1v1h-1zM8 400h1v1h-1zM8 402h1v1h-1zM8 404h1v1h-1zM8 406h1v1h-1zM8 408h1v1h-1zM8 410h1v1h-1zM8 412h1v1h-1zM8 414h1v1h-1zM8 416h1v1h-1zM8 418h1v1h-1zM8 420h1v1h-1zM8 432h1v1h-1zM8 434h1v1h-1zM8 436h1v1h-1zM8 438h1v1h-1zM8 440h1v1h-1zM8 442h1v1h-1zM8 444h1v1h-1zM8 446h1v1h-1zM8 448h1v1h-1zM8 450h1v1h-1zM8 452h1v1h-1zM8 454h1v1h-1zM8 456h1v1h-1zM8 458h1v1h-1zM8 460h1v1h-1zM8 462h1v1h-1zM8 464h1v1h-1zM8 466h1v1h-1zM8 468h1v1h-1zM8 470h1v1h-1zM8 472h1v1h-1zM8 474h1v1h-1zM10 102h1v1h-1zM10 120h1v1h-1zM10 138h1v1h-1zM10 192h1v1h-1zM10 336h1v1h-1zM10 408h1v1h-1zM12 102h1v1h-1zM12 120h1v1h-1zM12 138h1v1h-1zM12 192h1v1h-1zM12 336h1v1h-1zM12 408h1v1h-1zM14 12h1v1h-1zM14 102h1v1h-1zM14 120h1v1h-1zM14 138h1v1h-1zM14 156h1v1h-1zM14 192h1v1h-1zM14 210h1v1h-1zM14 336h1v1h-1zM14 354h1v1h-1zM14 408h1v1h-1zM14 426h1v1h-1zM14 480h1v1h-1zM16 12h1v1h-1zM16 102h1v1h-1zM16 120h1v1h-1zM16 138h1v1h-1zM16 156h1v1h-1zM16 192h1v1h-1zM16 210h1v1h-1zM16 336h1v1h-1zM16 354h1v1h-1zM16 408h1v1h-1zM16 426h1v1h-1zM16 480h1v1h-1zM18 12h1v1h-1zM18 102h1v1h-1zM18 120h1v1h-1zM18 138h1v1h-1zM18 156h1v1h-1zM18 192h1v1h-1zM18 210h1v1h-1zM18 336h1v1h-1zM18 354h1v1h-1zM18 408h1v1h-1zM18 426h1v1h-1zM18 480h1v1h-1zM27 20h1v1h-1zM27 22h1v1h-1zM27 24h1v1h-1zM27 36h1v1h-1zM27 38h1v1h-1zM27 40h1v1h-1zM27 42h1v1h-1zM27 44h1v1h-1zM27 46h1v1h-1zM27 48h1v1h-1zM27 50h1v1h-1zM27 52h1v1h-1zM27 54h1v1h-1zM27 56h1v1h-1zM27 58h1v1h-1zM27 60h1v1h-1zM27 62h1v1h-1zM27 64h1v1h-1zM27 66h1v1h-1zM27 68h1v1h-1zM27 70h1v1h-1zM27 72h1v1h-1zM27 74h1v1h-1zM27 76h1v1h-1zM27 78h1v1h-1zM27 80h1v1h-1zM27 82h1v1h-1zM27 164h1v1h-1zM27 166h1v1h-1zM27 168h1v1h-1zM27 218h1v1h-1zM27 220h1v1h-1zM27 222h1v1h-1zM27 234h1v1h-1zM27 236h1v1h-1zM27 238h1v1h-1zM27 240h1v1h-1zM27 242h1v1h-1zM27 244h1v1h-1zM27 246h1v1h-1zM27 248h1v1h-1zM27 250h1v1h-1zM27 252h1v1h-1zM27 254h1v1h-1zM27 256h1v1h-1zM27 258h1v1h-1zM27 260h1v1h-1zM27 262h1v1h-1zM27 264h1v1h-1zM27 266h1v1h-1zM27 268h1v1h-1zM27 270h1v1h-1zM27 272h1v1h-1zM27 274h1v1h-1zM27 276h1v1h-1zM27 278h1v1h-1zM27 280h1v1h-1zM27 282h1v1h-1zM27 284h1v1h-1zM27 286h1v1h-1zM27 288h1v1h-1zM27 290h1v1h-1zM27 292h1v1h-1zM27 294h1v1h-1zM27 296h1v1h-1zM27 298h1v1h-1zM27 300h1v1h-1zM27 302h1v1h-1zM27 304h1v1h-1zM27 306h1v1h-1zM27 308h1v1h-1zM27 310h1v1h-1zM27 312h1v1h-1zM27 314h1v1h-1zM27 316h1v1h-1zM27 362h1v1h-1zM27 364h1v1h-1zM27 366h1v1h-1zM27 368h1v1h-1zM27 370h1v1h-1zM27 372h1v1h-1zM27 374h1v1h-1zM27 376h1v1h-1zM27 378h1v1h-1zM27 380h1v1h-1zM27 382h1v1h-1zM27 384h1v1h-1zM27 386h1v1h-1zM27 388h1v1h-1zM27 434h1v1h-1zM27 436h1v1h-1zM27 438h1v1h-1zM27 440h1v1h-1zM27 442h1v1h-1zM27 444h1v1h-1zM27 446h1v1h-1zM27 448h1v1h-1zM27 450h1v1h-1zM27 452h1v1h-1zM27 454h1v1h-1zM27 456h1v1h-1zM27 458h1v1h-1zM27 460h1v1h-1zM28 84h1v1h-1zM28 264h1v1h-1zM28 282h1v1h-1zM28 300h1v1h-1zM28 318h1v1h-1zM28 372h1v1h-1zM28 390h1v1h-1zM28 444h1v1h-1zM28 462h1v1h-1zM30 84h1v1h-1zM30 264h1v1h-1zM30 282h1v1h-1zM30 300h1v1h-1zM30 318h1v1h-1zM30 372h1v1h-1zM30 390h1v1h-1zM30 444h1v1h-1zM30 462h1v1h-1zM32 84h1v1h-1zM32 264h1v1h-1zM32 282h1v1h-1zM32 300h1v1h-1zM32 318h1v1h-1zM32 372h1v1h-1zM32 390h1v1h-1zM32 444h1v1h-1zM32 462h1v1h-1zM34 30h1v1h-1zM34 84h1v1h-1zM34 174h1v1h-1zM34 228h1v1h-1zM34 264h1v1h-1zM34 282h1v1h-1zM34 300h1v1h-1zM34 318h1v1h-1zM34 372h1v1h-1zM34 390h1v1h-1zM34 444h1v1h-1zM34 462h1v1h-1zM36 30h1v1h-1zM36 84h1v1h-1zM36 174h1v1h-1zM36 228h1v1h-1zM36 264h1v1h-1zM36 282h1v1h-1zM36 300h1v1h-1zM36 318h1v1h-1zM36 372h1v1h-1zM36 390h1v1h-1zM36 444h1v1h-1zM36 462h1v1h-1zM46 38h1v1h-1zM46 40h1v1h-1zM46 42h1v1h-1zM46 236h1v1h-1zM46 238h1v1h-1zM46 240h1v1h-1zM52 48h1v1h-1zM52 246h1v1h-1zM54 48h1v1h-1zM54 246h1v1h-1zM56 48h1v1h-1zM56 246h1v1h-1zM65 56h1v1h-1zM65 58h1v1h-1zM65 60h1v1h-1zM65 62h1v1h-1zM65 64h1v1h-1zM66 66h1v1h-1zM68 66h1v1h-1zM70 66h1v1h-1zM72 66h1v1h-1zM74 66h1v1h-1z" fill="#7383a2"/></svg>
<div class="pm" style="left:4px;top:8px"></div>
<svg class="abs" style="left:19px;top:2px" width="16" height="16" viewBox="0 0 16 16" ><rect x="-0.4" y="2.3" width="8" height="13.5" fill="#5c5c5c"/><rect x="1.2" y="3.8" width="5.2" height="3.4" fill="#74d463"/><rect x="9" y="2" width="2.6" height="13.8" fill="#5c5c5c"/><rect x="12.6" y="2" width="3" height="13.8" fill="#5c5c5c"/><rect x="9.6" y="2.6" width="1.5" height="1.6" fill="#7edc6a"/><rect x="13.3" y="2.6" width="1.6" height="1.6" fill="#7edc6a"/><rect x="5.2" y="10.4" width="1.5" height="1.5" fill="#e8b84a"/><rect x="1" y="9" width="3" height="1" fill="#777"/></svg>
<div class="abs" style="left:38px;top:2px;width:130px;height:18px;background:#f5f5f5"></div>
<div class="row" style="left:40px;top:2px;color:#000">Unit configuration</div>
<div class="pm" style="left:23px;top:26px"></div>
<svg class="abs" style="left:38px;top:20px" width="16" height="16" viewBox="0 0 16 16" ><rect x="5.6" y="2" width="5.6" height="13.6" fill="#666"/><rect x="6.6" y="2.3" width="3.4" height="1.4" fill="#7edc6a"/><circle cx="12.3" cy="11.8" r="3.5" fill="#f4f4f4"/><circle cx="12.3" cy="11.8" r="2.2" fill="#3fae3a"/></svg>
<div class="row" style="left:59px;top:20px">[0]  KV-8000</div>
<div class="pm" style="left:42px;top:44px"></div>
<svg class="abs" style="left:57px;top:38px" width="16" height="16" viewBox="0 0 16 16" ><rect x="5.6" y="2" width="5.6" height="13.6" fill="#666"/><rect x="6.6" y="2.3" width="3.4" height="1.4" fill="#7edc6a"/><circle cx="12.3" cy="11.8" r="3.5" fill="#f4f4f4"/><circle cx="12.3" cy="11.8" r="2.2" fill="#3fae3a"/></svg>
<div class="row" style="left:78px;top:38px">EtherNet/IP   R30000  DM10000</div>
<svg class="abs" style="left:76px;top:56px" width="16" height="16" viewBox="0 0 16 16" ><path d="M3 8.2L9.5 2.3h4.3v13.3H3z" fill="#6a6a6a"/><path d="M3 8.2L9.5 2.3h4.3L7.5 8.2z" fill="#b4b4b4"/><path d="M7.5 8.2l6.3-5.9v13.3h-6.3z" fill="#5a5a5a"/><circle cx="10.6" cy="12" r="3.3" fill="#f4f4f4"/><circle cx="10.6" cy="12" r="2.1" fill="#3fae3a"/></svg>
<div class="row" style="left:97px;top:56px">[1]  Ixxat INpact EtherNet/IP(TM)</div>
<svg class="abs" style="left:38px;top:74px" width="16" height="16" viewBox="0 0 16 16" ><rect x="1" y="7" width="2.6" height="8.5" fill="#777"/><rect x="4.2" y="7" width="2.2" height="8.5" fill="#777"/><rect x="7" y="7" width="2.2" height="8.5" fill="#777"/><rect x="0.6" y="5" width="2.6" height="3.6" fill="#7edc6a"/><rect x="3.6" y="3.2" width="4.4" height="4.4" fill="#f39a2b"/><path d="M6.5 3.2a5.4 5.4 0 0 1 8 3.6" stroke="#c98f55" stroke-width="2.2" fill="none"/><path d="M4.2 1.6l4 .2l-1.5 3.8z" fill="#f39a2b"/><path d="M5.5 14.6a6 6 0 0 0 9-4" stroke="#4a8fd6" stroke-width="2.2" fill="none"/><path d="M11.6 8.6h4.6l-1.4 4.2z" fill="#4a8fd6"/></svg>
<div class="row" style="left:59px;top:74px">Unit configuration switching</div>
<svg class="abs" style="left:19px;top:92px" width="16" height="16" viewBox="0 0 16 16" ><rect x="0.8" y="1" width="14.6" height="14.4" fill="#fff" stroke="#8a8a8a" stroke-width="1"/><rect x="0.3" y="0.6" width="15.6" height="2.6" fill="#7a7a7a"/><path d="M2 7.2h4.5M9.6 7.2h4.5M6.5 4.7v5M9.6 4.7v5" stroke="#444" stroke-width="1.1" fill="none"/><rect x="2.5" y="10.6" width="11" height="3" fill="#55c34d"/></svg>
<div class="row" style="left:40px;top:92px">Device comment</div>
<svg class="abs" style="left:19px;top:110px" width="16" height="16" viewBox="0 0 16 16" ><rect x="0.8" y="1" width="14.6" height="14.4" fill="#fff" stroke="#8a8a8a" stroke-width="1"/><rect x="0.3" y="0.6" width="15.6" height="2.6" fill="#7a7a7a"/><rect x="2.5" y="4.8" width="11" height="3.4" fill="#3d7fe6"/><path d="M2 11.9h4.5M9.6 11.9h4.5M6.5 9.5v5M9.6 9.5v5" stroke="#444" stroke-width="1.1" fill="none"/></svg>
<div class="row" style="left:40px;top:110px">Variable</div>
<svg class="abs" style="left:19px;top:128px" width="16" height="16" viewBox="0 0 16 16" ><path d="M7.5 1h5.5l2.5 2.5v8h-8z" fill="#fff" stroke="#8a8a8a" stroke-width="0.9"/><path d="M4 2.8h6l2.5 2.5v8.5h-8.5z" fill="#fff" stroke="#8a8a8a" stroke-width="0.9"/><path d="M0.5 5.5h7l2.5 2.5v8h-9.5z" fill="#fff" stroke="#8a8a8a" stroke-width="0.9"/><path d="M2.5 9.3h5.5M2.5 11.3h5.5M2.5 13.3h5.5" stroke="#3d7fe6" stroke-width="1.1"/></svg>
<div class="row" style="left:40px;top:128px">Structure</div>
<div class="pm" style="left:4px;top:152px"></div>
<svg class="abs" style="left:19px;top:146px" width="16" height="16" viewBox="0 0 16 16" ><rect x="5.5" y="0.8" width="10" height="10" fill="#34496b" stroke="#e8e8e8"/><rect x="3.3" y="3" width="10" height="10" fill="#34496b" stroke="#e8e8e8"/><rect x="0.5" y="5.6" width="10.8" height="10.2" fill="#fff" stroke="#9a9a9a"/><path d="M2 9.3l3.8 2.6L2 14.5z" fill="#2e86e0"/><path d="M7 9.2v5.3M9.3 9.2v5.3" stroke="#2e86e0" stroke-width="1.3"/><path d="M4.5 8.3h6" stroke="#2e86e0" stroke-width="1"/></svg>
<div class="row" style="left:40px;top:146px">Operation recorder setting</div>
<div class="pm plus" style="left:23px;top:170px"></div>
<svg class="abs" style="left:38px;top:164px" width="16" height="16" viewBox="0 0 16 16" ><rect x="0" y="1.4" width="7.7" height="12.2" fill="#333"/><rect x="1" y="2.4" width="5.5" height="3.2" fill="#a8a8a8"/><rect x="1" y="7" width="2" height="5.5" fill="#6a8a5a"/><rect x="4" y="7" width="1.2" height="5.5" fill="#555"/><rect x="6.3" y="6.4" width="10" height="9.4" rx="1" fill="#8a3bb0"/><rect x="8.6" y="8" width="5.6" height="3.2" fill="#fff"/><rect x="9.5" y="12.6" width="3.8" height="3" fill="#fff"/><rect x="10.8" y="13.4" width="1.2" height="2.2" fill="#8a3bb0"/></svg>
<div class="row" style="left:59px;top:164px">ID0</div>
<svg class="abs" style="left:19px;top:182px" width="16" height="16" viewBox="0 0 16 16" ><rect x="1" y="2" width="8.5" height="14" fill="#5c5c5c"/><rect x="2" y="3.4" width="6" height="3.2" fill="#5fd06a"/><rect x="10.5" y="1.5" width="2.2" height="14.5" fill="#5c5c5c"/><rect x="13.4" y="1.5" width="1.4" height="14.5" fill="#5c5c5c"/><rect x="6.6" y="9" width="1.5" height="1.5" fill="#e8b84a"/><rect x="6.6" y="12" width="1.5" height="1.5" fill="#d85a4a"/><rect x="2" y="9" width="3" height="1" fill="#777"/><rect x="2" y="12" width="3" height="1" fill="#777"/><rect x="11" y="8.5" width="1.3" height="1.5" fill="#e8b84a"/></svg>
<div class="row" style="left:40px;top:182px">CPU system setting</div>
<div class="pm" style="left:4px;top:206px"></div>
<svg class="abs" style="left:19px;top:200px" width="16" height="16" viewBox="0 0 16 16" ><path d="M7 0.8h5.5l2 2v6h-7.5z" fill="#fff" stroke="#8a8a8a" stroke-width="0.9"/><path d="M5 2.2h5.5l2 2v6h-7.5z" fill="#fff" stroke="#8a8a8a" stroke-width="0.9"/><path d="M3 3.6h5.5l2 2v6h-7.5z" fill="#fff" stroke="#8a8a8a" stroke-width="0.9"/><rect x="-0.4" y="8" width="16.4" height="7.6" rx="0.8" fill="#a6dba0"/><path d="M0.5 10.4h15M0.5 13.4h15M4.5 9v2.8M6.8 9v2.8M4.5 12v2.8M6.8 12v2.8M11 9v2.8M11 12v2.8" stroke="#3f8f3f" stroke-width="1" fill="none"/></svg>
<div class="row" style="left:40px;top:200px">Program: MM_Camera_KV</div>
<div class="pm" style="left:23px;top:224px"></div>
<svg class="abs" style="left:38px;top:218px" width="16" height="16" viewBox="0 0 16 16" ><path d="M0.6 3.1h4.8l1.4 1.9h8.8v10H0.6z" fill="#f2b53a"/><path d="M0.6 6.2h15v8.8H0.6z" fill="#fcd879"/></svg>
<div class="row" style="left:59px;top:218px">Every-scan execution</div>
<div class="pm plus" style="left:42px;top:242px"></div>
<svg class="abs" style="left:57px;top:236px" width="16" height="16" viewBox="0 0 16 16" ><path d="M2.3 1.8h9.6l3 3v11h-12.6z" fill="#fff" stroke="#8a8a8a" stroke-width="0.9"/><path d="M3.5 6.8h2.2M6.9 6.8h1.5M11.4 6.8h2.3M5.7 5.2v3.2M6.9 5.2v3.2M3.5 11.8h2.2M6.9 11.8h1.5M11.4 11.8h2.3M5.7 10.2v3.2M6.9 10.2v3.2" stroke="#444" stroke-width="1" fill="none"/><circle cx="9.9" cy="6.8" r="1.3" fill="none" stroke="#444" stroke-width="0.9"/><circle cx="9.9" cy="11.8" r="1.3" fill="none" stroke="#444" stroke-width="0.9"/></svg>
<div class="row" style="left:78px;top:236px">Main</div>
<svg class="abs" style="left:38px;top:254px" width="16" height="16" viewBox="0 0 16 16" ><path d="M0.6 3.1h4.8l1.4 1.9h8.8v10H0.6z" fill="#f2b53a"/><path d="M0.6 6.2h15v8.8H0.6z" fill="#fcd879"/></svg>
<div class="row" style="left:59px;top:254px">Initialize module</div>
<svg class="abs" style="left:38px;top:272px" width="16" height="16" viewBox="0 0 16 16" ><path d="M0.6 3.1h4.8l1.4 1.9h8.8v10H0.6z" fill="#f2b53a"/><path d="M0.6 6.2h15v8.8H0.6z" fill="#fcd879"/></svg>
<div class="row" style="left:59px;top:272px">Standby module</div>
<svg class="abs" style="left:38px;top:290px" width="16" height="16" viewBox="0 0 16 16" ><path d="M0.6 3.1h4.8l1.4 1.9h8.8v10H0.6z" fill="#f2b53a"/><path d="M0.6 6.2h15v8.8H0.6z" fill="#fcd879"/></svg>
<div class="row" style="left:59px;top:290px">Fixed-period module</div>
<svg class="abs" style="left:38px;top:308px" width="16" height="16" viewBox="0 0 16 16" ><path d="M0.6 3.1h4.8l1.4 1.9h8.8v10H0.6z" fill="#f2b53a"/><path d="M0.6 6.2h15v8.8H0.6z" fill="#fcd879"/></svg>
<div class="row" style="left:59px;top:308px">Inter-unit sync module</div>
<svg class="abs" style="left:19px;top:326px" width="16" height="16" viewBox="0 0 16 16" ><rect x="11.5" y="2.5" width="4" height="10" fill="#fff" stroke="#777" stroke-width="0.9" stroke-dasharray="1 1"/><rect x="10" y="4.5" width="4" height="10" fill="#fff" stroke="#777" stroke-width="0.9" stroke-dasharray="1 1"/><path d="M3.6 1h8.2l1 3.5l-1.5 3.6H1L1 5z" fill="#8fa9e0"/><rect x="2" y="7.6" width="9.6" height="8.5" fill="#fff"/><path d="M2.6 12h2M5.8 12h2M10 12h1.5M4.6 10.2v3.6M5.8 10.2v3.6" stroke="#333" stroke-width="1" fill="none"/><circle cx="8.9" cy="12" r="1.2" fill="none" stroke="#333" stroke-width="0.9"/></svg>
<div class="row" style="left:40px;top:326px">Function Block</div>
<div class="pm" style="left:4px;top:350px"></div>
<svg class="abs" style="left:19px;top:344px" width="16" height="16" viewBox="0 0 16 16" ><rect x="11.5" y="2.5" width="4" height="10" fill="#fff" stroke="#777" stroke-width="0.9" stroke-dasharray="1 1"/><rect x="10" y="4.5" width="4" height="10" fill="#fff" stroke="#777" stroke-width="0.9" stroke-dasharray="1 1"/><path d="M3.6 1h8.2l1 3.5l-1.5 3.6H1L1 5z" fill="#4fa06a"/><rect x="2" y="7.6" width="9.6" height="8.5" fill="#fff"/><path d="M2.6 12h2M5.8 12h2M10 12h1.5M4.6 10.2v3.6M5.8 10.2v3.6" stroke="#333" stroke-width="1" fill="none"/><circle cx="8.9" cy="12" r="1.2" fill="none" stroke="#333" stroke-width="0.9"/></svg>
<div class="row" style="left:40px;top:344px">Macro</div>
<svg class="abs" style="left:38px;top:362px" width="16" height="16" viewBox="0 0 16 16" ><path d="M1.3 3.4h4.4l1.3 1.8h8.3V16H1.3z" fill="#90d8a2"/><path d="M4 7.2h7v3.3H7.5v2" stroke="#2f6fd0" stroke-width="1.4" fill="none"/><path d="M4.6 12h5.8L7.5 15.4z" fill="#2f6fd0"/></svg>
<div class="row" style="left:59px;top:362px">Subroutine macro</div>
<svg class="abs" style="left:38px;top:380px" width="16" height="16" viewBox="0 0 16 16" ><path d="M1.3 3.4h4.4l1.3 1.8h8.3V16H1.3z" fill="#90d8a2"/><path d="M5 16v-5.3h5.5" stroke="#2f6fd0" stroke-width="1.5" fill="none"/><path d="M9.6 7.5l4.4 3.2l-4.4 3.2z" fill="#2f6fd0"/></svg>
<div class="row" style="left:59px;top:380px">Self-hold macro</div>
<svg class="abs" style="left:19px;top:398px" width="16" height="16" viewBox="0 0 16 16" ><rect x="0.7" y="1.5" width="14.4" height="11" fill="#f8f8f8"/><path d="M0.7 2h14.4M0.7 5h14.4M0.7 8h14.4M0.7 11h14.4M1.2 1.5v11.5M4.7 1.5v11.5M8 1.5v11.5M11.3 1.5v11.5M14.6 1.5v11.5" stroke="#6e6e6e" stroke-width="1.1" fill="none"/><path d="M0.7 13.6h14.4" stroke="#e8e8e8" stroke-width="1.2" stroke-dasharray="1.2 1"/></svg>
<div class="row" style="left:40px;top:398px">Device default</div>
<div class="pm" style="left:4px;top:422px"></div>
<svg class="abs" style="left:19px;top:416px" width="16" height="16" viewBox="0 0 16 16" ><path d="M8 1.3h5.6l2.2 2.2v7.8h-7.8z" fill="#fff" stroke="#8a8a8a" stroke-width="0.9"/><path d="M5 2.8h5.6l2.2 2.2v8.3h-7.8z" fill="#fff" stroke="#8a8a8a" stroke-width="0.9"/><path d="M0.5 4.6h7l2.8 2.8v8.2h-9.8z" fill="#fff" stroke="#8a8a8a" stroke-width="0.9"/><path d="M3.3 7.6v5.4M3.3 7.6h3.2M3.3 10h2.6" stroke="#2f6fd0" stroke-width="1.3" fill="none"/></svg>
<div class="row" style="left:40px;top:416px">File register setting</div>
<svg class="abs" style="left:38px;top:434px" width="16" height="16" viewBox="0 0 16 16" ><path d="M0.6 3.1h4.8l1.4 1.9h8.8v10H0.6z" fill="#f2b53a"/><path d="M0.6 6.2h15v8.8H0.6z" fill="#fcd879"/></svg>
<div class="row" style="left:59px;top:434px">0:Memory card</div>
<svg class="abs" style="left:38px;top:452px" width="16" height="16" viewBox="0 0 16 16" ><path d="M0.6 3.1h4.8l1.4 1.9h8.8v10H0.6z" fill="#f2b53a"/><path d="M0.6 6.2h15v8.8H0.6z" fill="#fcd879"/></svg>
<div class="row" style="left:59px;top:452px">1:CPU memory</div>
<div class="pm plus" style="left:4px;top:476px"></div>
<svg class="abs" style="left:19px;top:470px" width="16" height="16" viewBox="0 0 16 16" ><path d="M7 1h5.3l2.2 2.2v6.8h-7.5z" fill="#fff" stroke="#8a8a8a" stroke-width="0.9"/><path d="M3.5 2.5h5.6l2.4 2.4v6.6h-8z" fill="#fff" stroke="#8a8a8a" stroke-width="0.9"/><rect x="-0.2" y="9.8" width="15.3" height="6.2" fill="#f0ad2a"/></svg>
<div class="row" style="left:40px;top:470px">User document</div>
<div class="abs" style="left:71px;top:54px;width:28px;height:25px;border:3px solid #f4931c"></div>
</div>
<div class="abs" style="left:342px;top:100px;width:523px;height:531px;background:#f0f0f0"></div>
<div class="abs" style="left:346px;top:121px;width:519px;height:1px;background:#b9b9b9"></div>
<div id="tab" class="abs"><div class="t mono" style="left:4px;top:4px;line-height:14px;color:#000;font-size:12px;letter-spacing:0;transform:scaleX(0.8333);transform-origin:0 0">Main</div>
<svg class="abs" style="left:55.5px;top:6px" width="10" height="10" viewBox="0 0 10 10" ><path d="M1 1L9 9M9 1L1 9" stroke="#111" stroke-width="2" fill="none"/></svg>
</div>
<div id="grid" class="abs">
<div class="gh" style="left:0;top:0;width:519px;height:24px"></div>
<div class="gh" style="left:0;top:0;width:157px;height:483px"></div>
<div class="gl" style="left:0;top:0;width:519px;height:1px"></div>
<div class="gl" style="left:0;top:23px;width:519px;height:1px"></div>
<div class="gl" style="left:0;top:0;width:1px;height:483px"></div>
<div class="gl" style="left:117px;top:0;width:1px;height:483px"></div>
<div class="gl" style="left:157px;top:0;width:1px;height:24px"></div>
<div class="gl" style="left:292px;top:0;width:1px;height:24px"></div>
<div class="gl" style="left:425px;top:0;width:1px;height:24px"></div>
<div class="gl" style="left:0;top:203px;width:157px;height:1px"></div>
<div class="gl" style="left:0;top:383px;width:157px;height:1px"></div>
<div class="abs" style="left:157px;top:24px;width:2px;height:459px;background:#000"></div>
<div class="abs" style="left:292px;top:24px;width:1px;height:459px;background:repeating-linear-gradient(to bottom,#c9c9c9 0,#c9c9c9 3px,transparent 3px,transparent 6px)"></div>
<div class="abs" style="left:425px;top:24px;width:1px;height:459px;background:repeating-linear-gradient(to bottom,#c9c9c9 0,#c9c9c9 3px,transparent 3px,transparent 6px)"></div>
<div class="abs" style="left:159px;top:203px;width:360px;height:1px;background:repeating-linear-gradient(to right,#c9c9c9 0,#c9c9c9 3px,transparent 3px,transparent 6px)"></div>
<div class="abs" style="left:159px;top:383px;width:360px;height:1px;background:repeating-linear-gradient(to right,#c9c9c9 0,#c9c9c9 3px,transparent 3px,transparent 6px)"></div>
<div class="abs" style="left:292px;top:0px;width:134px;height:24px;background:#d6e6fc;border-top:1px solid #6c6c6c;border-left:1px solid #6c6c6c;border-right:1px solid #9aa0aa;border-bottom:1px solid #d6e6fc"><div class="abs" style="left:0;top:0;right:0;height:1px;background:#9aa3b0"></div><div class="abs" style="left:0;top:0;bottom:0;width:1px;background:#9aa3b0"></div></div>
<div class="abs" style="left:0px;top:203px;width:118px;height:181px;background:#d6e6fc;border-top:1px solid #6c6c6c;border-left:1px solid #6c6c6c;border-right:1px solid #6c6c6c;border-bottom:1px solid #9aa0aa"><div class="abs" style="left:0;top:0;right:0;height:1px;background:#9aa3b0"></div><div class="abs" style="left:0;top:0;bottom:0;width:1px;background:#9aa3b0"></div></div>
<div class="abs" style="left:117px;top:203px;width:41px;height:181px;background:#d6e6fc;border-top:1px solid #6c6c6c;border-left:1px solid #6c6c6c;border-right:1px solid #d6e6fc;border-bottom:1px solid #9aa0aa"><div class="abs" style="left:0;top:0;right:0;height:1px;background:#9aa3b0"></div><div class="abs" style="left:0;top:0;bottom:0;width:1px;background:#9aa3b0"></div></div>
<div class="abs" style="left:157px;top:24px;width:2px;height:459px;background:#000"></div>
<div class="abs" style="left:292px;top:204px;width:134px;height:180px;border:2px solid #b4e69a;background:#fff"></div>
<div class="num" style="left:157.5px;top:1px;width:135px">1</div>
<div class="num" style="left:291.5px;top:1px;width:135px">2</div>
<div class="num" style="left:426.5px;top:1px;width:135px">3</div>
<div class="num" style="left:0;top:103px;width:134px">00004</div>
<div class="num" style="left:0;top:283px;width:134px">00005</div>
<div class="num" style="left:0;top:463px;width:134px">00006</div>
</div>
</body></html>
